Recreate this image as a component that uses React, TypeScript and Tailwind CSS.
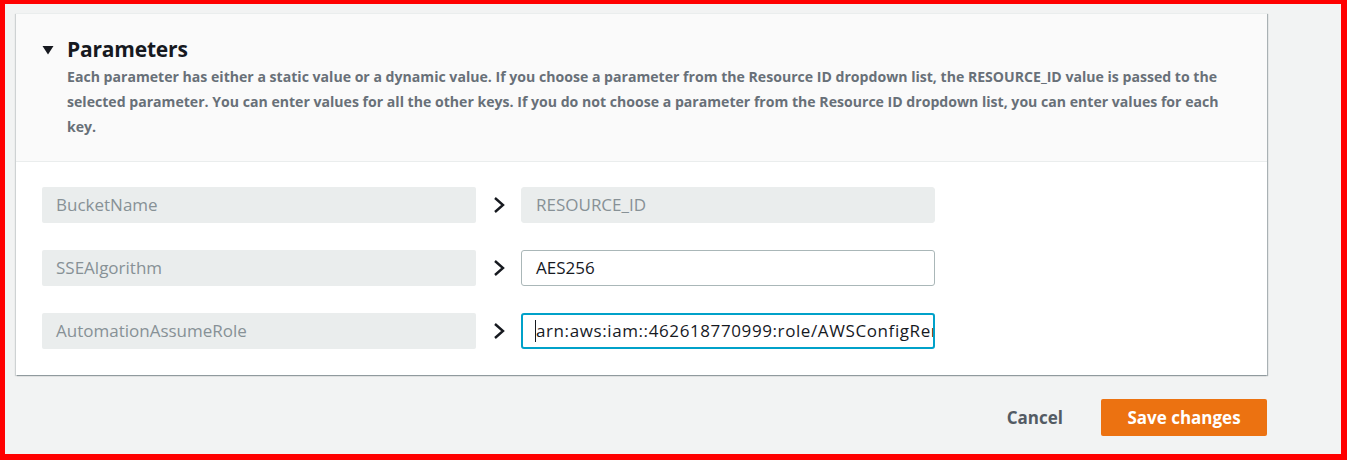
import React from "react";

function Chevron() {
  return (
    <svg width="14" height="18" viewBox="0 0 14 18" className="shrink-0">
      <path d="M3 2 L11 9 L3 16" fill="none" stroke="#16191f" strokeWidth="2.4" strokeLinejoin="miter" />
    </svg>
  );
}

function Row({ name, value, kind }: { name: string; value: string; kind: "disabled" | "normal" | "focus" }) {
  const right =
    kind === "disabled"
      ? "bg-[#eaeded] text-[#879196] border border-[#eaeded]"
      : kind === "normal"
      ? "bg-white text-[#16191f] border border-[#aab7b8]"
      : "bg-white text-[#16191f] border-2 border-[#00a1c9] tracking-[0.6px]";
  return (
    <div className="flex items-center h-[36px]">
      <div className="w-[434px] h-[36px] rounded-[2px] bg-[#eaeded] text-[#879196] flex items-center px-[14px] text-[17px]">
        {name}
      </div>
      <div className="w-[45px] flex justify-center">
        <Chevron />
      </div>
      <div className={`w-[414px] h-[36px] rounded-[3px] flex items-center text-[17px] overflow-hidden whitespace-nowrap ${kind === "focus" ? "pl-[12px]" : "px-[14px]"} ${right}`}>
        {kind === "focus" && <span className="inline-block w-[1px] h-[22px] bg-[#16191f] shrink-0" />}
        {value}
      </div>
    </div>
  );
}

export default function App() {
  return (
    <div className="w-[1347px] h-[460px] bg-[#ff0000] pt-[4px] pl-[5px] pr-[6px] pb-[6px]" style={{ fontFamily: '"Open Sans", "Noto Sans", sans-serif' }}>
      <div className="w-full h-full bg-[#f2f3f3] pl-[11px] pt-[9px] pr-[74px]">
        <div className="bg-white shadow-[1px_1px_1px_0_rgba(0,28,36,0.3),-1px_1px_1px_0_rgba(0,28,36,0.15)] border-t border-[#eaeded]">
          <div className="bg-[#fafafa] border-b border-[#eaeded] pl-[26px] pr-[30px] pt-[22px] pb-[22px]">
            <div className="flex items-center h-[28px]">
              <svg width="12" height="10" viewBox="0 0 12 10" className="mr-[13px]">
                <path d="M0.5 1 L11.5 1 L6 9.5 Z" fill="#16191f" />
              </svg>
              <span className="text-[21px] font-bold text-[#16191f] tracking-[-0.2px]">Parameters</span>
            </div>
            <p className="pl-[25px] text-[14.1px] leading-[25px] font-bold text-[#687078]">
              Each parameter has either a static value or a dynamic value. If you choose a parameter from the Resource ID dropdown list, the RESOURCE_ID value is passed to the selected parameter. You can enter values for all the other keys. If you do not choose a parameter from the Resource ID dropdown list, you can enter values for each key.
            </p>
          </div>
          <div className="pl-[26px] pt-[25px] pb-[26px] flex flex-col gap-[27px]">
            <Row name="BucketName" value="RESOURCE_ID" kind="disabled" />
            <Row name="SSEAlgorithm" value="AES256" kind="normal" />
            <Row name="AutomationAssumeRole" value="arn:aws:iam::462618770999:role/AWSConfigRemediationRole" kind="focus" />
          </div>
        </div>
        <div className="flex justify-end items-center mt-[24px] gap-[38px]">
          <span className="text-[17px] font-bold text-[#545b64]">Cancel</span>
          <button className="w-[166px] h-[37px] rounded-[2px] bg-[#ec7211] text-white text-[17px] font-bold">Save changes</button>
        </div>
      </div>
    </div>
  );
}
